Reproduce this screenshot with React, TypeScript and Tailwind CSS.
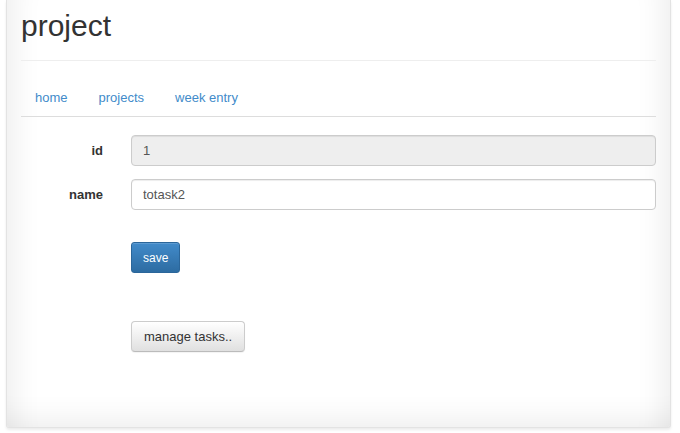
export default function App() {
    return (
        <div className="h-[433px] w-[680px] overflow-hidden bg-white font-['Liberation_Sans',Arial,sans-serif] text-[13px] text-[#333]">
            {/* Page panel */}
            <div className="ml-[6px] h-[428px] w-[665px] rounded-b-[3px] border-x border-b border-[#e3e3e3] bg-white pl-[14px] pr-[14px] shadow-[inset_36px_0_30px_-30px_rgba(0,0,0,0.08),inset_-36px_0_30px_-30px_rgba(0,0,0,0.08),inset_0_-36px_30px_-30px_rgba(0,0,0,0.08),0_2px_3px_rgba(0,0,0,0.08)]">
                <h2 className="pt-[9px] text-[30px] leading-[33px] font-normal text-[#333]">project</h2>
                <hr className="mt-[18px] border-t border-[#eee]" />

                {/* Nav */}
                <ul className="mt-[15px] flex border-b border-[#ddd]">
                    {['home', 'projects', 'week entry'].map((item) => (
                        <li key={item} className="mr-[3px]">
                            <a href="#" className="block px-[14px] pt-[12px] pb-[8px] leading-[20px] text-[#428bca]">
                                {item}
                            </a>
                        </li>
                    ))}
                </ul>

                {/* Form */}
                <form className="mt-[18px] flex flex-col gap-[13px]">
                    <div className="flex items-center">
                        <label className="w-[82px] text-right font-bold">id</label>
                        <input
                            disabled
                            value="1"
                            readOnly
                            className="ml-[28px] h-[31px] flex-1 rounded-[4px] border border-[#ccc] bg-[#eee] px-[11px] text-[13px] text-[#555] shadow-[inset_0_1px_1px_rgba(0,0,0,0.075)] outline-none"
                        />
                    </div>
                    <div className="flex items-center">
                        <label className="w-[82px] text-right font-bold">name</label>
                        <input
                            value="totask2"
                            readOnly
                            className="ml-[28px] h-[31px] flex-1 rounded-[4px] border border-[#ccc] bg-white px-[11px] text-[13px] text-[#555] shadow-[inset_0_1px_1px_rgba(0,0,0,0.075)] outline-none"
                        />
                    </div>
                    <div className="mt-[19px] pl-[110px]">
                        <button
                            type="button"
                            className="h-[31px] rounded-[3px] border border-[#2b669a] bg-gradient-to-b from-[#428bca] to-[#2d6ca2] px-[11px] text-[12px] text-white shadow-[inset_0_1px_0_rgba(255,255,255,0.15)]"
                        >
                            save
                        </button>
                    </div>
                    <div className="mt-[35px] pl-[110px]">
                        <button
                            type="button"
                            className="h-[31px] rounded-[4px] border border-[#ccc] border-b-[#bbb] bg-gradient-to-b from-white to-[#e0e0e0] px-[12px] text-[13px] text-[#333] shadow-[0_1px_1px_rgba(0,0,0,0.05)]"
                        >
                            manage tasks..
                        </button>
                    </div>
                </form>
            </div>
        </div>
    );
}
